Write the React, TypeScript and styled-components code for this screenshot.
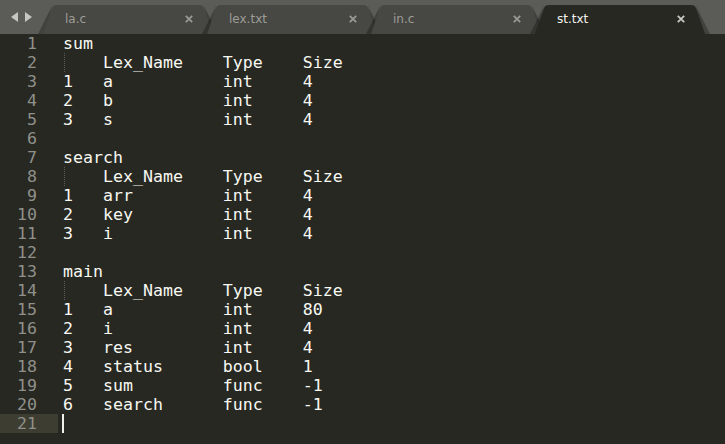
import React from "react";
import styled, { createGlobalStyle } from "styled-components";

const Global = createGlobalStyle`
  html, body { margin: 0; padding: 0; background: #272822; overflow: hidden; }
  #root { width: 725px; height: 444px; }
`;

const Window = styled.div`
  width: 725px;
  height: 444px;
  display: flex;
  flex-direction: column;
  background: #272822;
`;

const TabBar = styled.div`
  height: 34px;
  flex: none;
  display: flex;
  align-items: flex-end;
  background: #5b5b57;
`;

const Nav = styled.div`
  width: 43px;
  height: 34px;
  flex: none;
  display: flex;
  align-items: center;
  padding-left: 11px;
  gap: 7px;
  box-sizing: border-box;
`;

const Tab = styled.div<{ $active?: boolean; $first?: boolean }>`
  position: relative;
  width: 170px;
  height: 29px;
  flex: none;
  margin-left: ${(p) => (p.$first ? 0 : -6)}px;
  display: flex;
  align-items: center;
  padding: 0 20px 1px 22px;
  box-sizing: border-box;
  z-index: ${(p) => (p.$active ? 5 : 1)};
  font-family: "DejaVu Sans", "Noto Sans", sans-serif;
  font-size: 12px;
  color: ${(p) => (p.$active ? "#f2f2ee" : "#9d9d98")};
`;

const Shape = styled.svg`
  position: absolute;
  left: 0;
  top: 0;
  overflow: visible;
  z-index: -1;
`;

const Label = styled.span`
  position: relative;
  flex: 1;
  white-space: nowrap;
`;

const Close = styled.svg`
  position: relative;
  flex: none;
`;

const Editor = styled.div`
  flex: 1;
  display: flex;
  font-family: "DejaVu Sans Mono", "Liberation Mono", monospace;
  font-size: 16.6px;
  line-height: 19px;
`;

const Gutter = styled.div`
  width: 62px;
  flex: none;
`;

const LineNo = styled.div<{ $current?: boolean }>`
  width: 58px;
  height: 19px;
  box-sizing: border-box;
  padding-right: 21px;
  text-align: right;
  color: #90908a;
  background: ${(p) => (p.$current ? "#3e3d32" : "transparent")};
`;

const Code = styled.div`
  flex: 1;
  padding-left: 1px;
  color: #f8f8f2;
`;

const Line = styled.div`
  position: relative;
  height: 19px;
  white-space: pre;
`;

const Guide = styled.span`
  display: inline-block;
  width: 4ch;
  height: 19px;
  vertical-align: top;
  box-sizing: border-box;
  border-left: 1px dotted #5c5d55;
  margin-left: 1px;
  margin-right: -1px;
`;

const Caret = styled.span`
  display: inline-block;
  width: 2px;
  height: 19px;
  margin-left: -1px;
  vertical-align: top;
  background: #f0f0ea;
`;

const TabShape = ({ fill }: { fill: string }) => (
  <Shape width="170" height="29" viewBox="0 0 170 29">
    <path d="M9 1 L-5 29 L3 29 Z" fill="rgba(0,0,0,0.28)" />
    <path d="M161 1 L175 29 L167 29 Z" fill="rgba(0,0,0,0.28)" />
    <path d="M0 29 L9 3 Q10 0 14 0 L156 0 Q160 0 161 3 L170 29 Z" fill={fill} />
  </Shape>
);

const CloseIcon = ({ color }: { color: string }) => (
  <Close width="8" height="8" viewBox="0 0 8 8">
    <path d="M0.8 0.8 L7.2 7.2 M7.2 0.8 L0.8 7.2" stroke={color} strokeWidth="1.8" />
  </Close>
);

const tabs = ["la.c", "lex.txt", "in.c", "st.txt"];
const activeTab = 3;

type Row = [string, string, string, string];
const sections: { name: string; rows: Row[] }[] = [
  { name: "sum", rows: [["1", "a", "int", "4"], ["2", "b", "int", "4"], ["3", "s", "int", "4"]] },
  { name: "search", rows: [["1", "arr", "int", "4"], ["2", "key", "int", "4"], ["3", "i", "int", "4"]] },
  {
    name: "main",
    rows: [
      ["1", "a", "int", "80"],
      ["2", "i", "int", "4"],
      ["3", "res", "int", "4"],
      ["4", "status", "bool", "1"],
      ["5", "sum", "func", "-1"],
      ["6", "search", "func", "-1"],
    ],
  },
];

type L = { kind: "text"; text: string } | { kind: "header" } | { kind: "caret" };

const lines: L[] = [];
sections.forEach((s, i) => {
  if (i > 0) lines.push({ kind: "text", text: "" });
  lines.push({ kind: "text", text: s.name });
  lines.push({ kind: "header" });
  s.rows.forEach((r) => {
    lines.push({ kind: "text", text: r[0].padEnd(4) + r[1].padEnd(12) + r[2].padEnd(8) + r[3] });
  });
});
lines.push({ kind: "caret" });

export default function App() {
  return (
    <>
      <Global />
      <Window>
        <TabBar>
          <Nav>
            <svg width="7" height="10" viewBox="0 0 7 10">
              <path d="M7 0 L0 5 L7 10 Z" fill="#c6c6c2" />
            </svg>
            <svg width="7" height="10" viewBox="0 0 7 10">
              <path d="M0 0 L7 5 L0 10 Z" fill="#c6c6c2" />
            </svg>
          </Nav>
          {tabs.map((t, i) => (
            <Tab key={t} $first={i === 0} $active={i === activeTab}>
              <TabShape fill={i === activeTab ? "#272822" : "#474743"} />
              <Label>{t}</Label>
              <CloseIcon color={i === activeTab ? "#c8c8c4" : "#9a9a95"} />
            </Tab>
          ))}
        </TabBar>
        <Editor>
          <Gutter>
            {lines.map((l, i) => (
              <LineNo key={i} $current={l.kind === "caret"}>
                {i + 1}
              </LineNo>
            ))}
          </Gutter>
          <Code>
            {lines.map((l, i) => (
              <Line key={i}>
                {l.kind === "text" && l.text}
                {l.kind === "header" && (
                  <>
                    <Guide />
                    {"Lex_Name    Type    Size"}
                  </>
                )}
                {l.kind === "caret" && <Caret />}
              </Line>
            ))}
          </Code>
        </Editor>
      </Window>
    </>
  );
}
